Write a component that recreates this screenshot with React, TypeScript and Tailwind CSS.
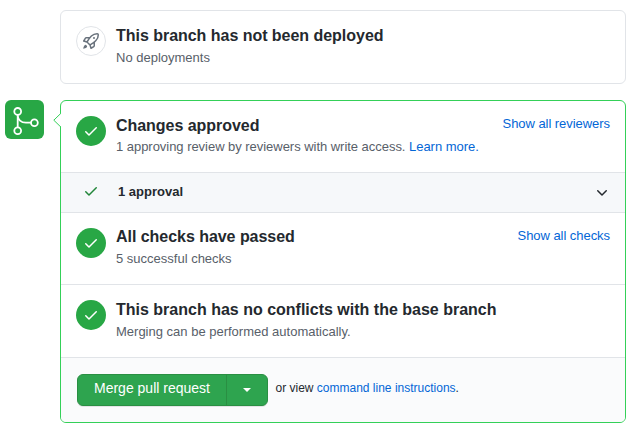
import type { ReactNode } from "react";

const CHECK =
  "M13.78 4.22a.75.75 0 010 1.06l-7.25 7.25a.75.75 0 01-1.06 0L2.22 9.28a.75.75 0 011.06-1.06L6 10.94l6.72-6.72a.75.75 0 011.06 0z";
const CHEVRON =
  "M12.78 6.22a.75.75 0 010 1.06l-4.25 4.25a.75.75 0 01-1.06 0L3.22 7.28a.75.75 0 011.06-1.06L8 9.94l3.72-3.72a.75.75 0 011.06 0z";
const ROCKET =
  "M14.064 0a8.75 8.75 0 00-6.187 2.563l-.459.458c-.314.314-.616.641-.904.979H3.31a1.75 1.75 0 00-1.49.833L.11 7.607a.75.75 0 00.418 1.11l3.102.954c.037.051.079.1.124.145l2.429 2.428c.046.046.094.088.145.125l.954 3.102a.75.75 0 001.11.418l2.774-1.707a1.75 1.75 0 00.833-1.49V9.485c.338-.288.665-.59.979-.904l.458-.459A8.75 8.75 0 0016 1.936V1.75A1.75 1.75 0 0014.25 0h-.186zM10.5 10.625c-.088.06-.177.118-.266.175l-2.35 1.521.548 1.783 1.949-1.2a.25.25 0 00.119-.213v-2.066zM3.678 8.116L5.2 5.766c.058-.09.117-.178.176-.266H3.309a.25.25 0 00-.213.119l-1.2 1.95 1.782.547zm5.26-4.493A7.25 7.25 0 0114.063 1.5h.186a.25.25 0 01.25.25v.186a7.25 7.25 0 01-2.123 5.127l-.459.458a15.21 15.21 0 01-2.499 2.02l-2.317 1.5-2.143-2.143 1.5-2.317a15.25 15.25 0 012.02-2.5l.458-.458h.002zM12 5a1 1 0 11-2 0 1 1 0 012 0zm-8.44 9.56a1.5 1.5 0 10-2.12-2.12c-.734.73-1.047 2.332-1.15 3.003a.23.23 0 00.265.265c.671-.103 2.273-.416 3.005-1.148z";

function Icon({ d, className = "" }: { d: string; className?: string }) {
  return (
    <svg viewBox="0 0 16 16" className={`size-4 shrink-0 ${className}`} fill="currentColor">
      <path fillRule="evenodd" d={d} />
    </svg>
  );
}

function Section({
  title,
  action,
  className,
  textClass,
  children,
}: {
  title: string;
  action?: string;
  className: string;
  textClass: string;
  children: ReactNode;
}) {
  return (
    <section className={`flex items-start border-b border-[#e1e4e8] px-[15px] ${className}`}>
      <span className="flex size-[30px] shrink-0 items-center justify-center rounded-full bg-[#28a745] text-white">
        <Icon d={CHECK} />
      </span>
      <div className={`ml-[10px] grow ${textClass}`}>
        <h3 className="text-[16px] leading-[24px] font-bold">{title}</h3>
        <p className="text-[13px] leading-[20px] text-[#586069]">{children}</p>
      </div>
      {action && (
        <a className="-mt-[2px] text-[13px] leading-[20px] tracking-[-0.05px] text-[#0366d6]">{action}</a>
      )}
    </section>
  );
}

export default function App() {
  return (
    <main className="h-[432px] w-[640px] overflow-hidden bg-white pt-[10px] pr-[14px] pl-[5px] font-['Liberation_Sans',sans-serif] text-[#24292e]">
      <section className="ml-[55px] flex h-[74px] rounded-[6px] border border-[#e1e4e8] px-[15px] pt-[15px]">
        <span className="flex size-[30px] shrink-0 items-center justify-center rounded-full border border-[#e1e4e8] text-[#6a737d]">
          <Icon d={ROCKET} />
        </span>
        <div className="-mt-[2px] ml-[10px]">
          <h3 className="text-[16px] leading-[24px] font-bold tracking-[-0.03px]">This branch has not been deployed</h3>
          <p className="text-[13px] leading-[20px] text-[#586069]">No deployments</p>
        </div>
      </section>

      <div className="mt-4 flex items-start">
        <span className="size-[39px] shrink-0 rounded-[6px] bg-[#28a745]">
          <svg viewBox="0 0 39 39" className="size-full" fill="none" stroke="white" strokeWidth="1.8">
            <circle cx="12.7" cy="11.4" r="3.4" />
            <circle cx="12.7" cy="30.8" r="3.4" />
            <circle cx="29.4" cy="22.7" r="3.4" />
            <path d="M12.7 14.8v12.6M12.7 15c0 4.600 3.400 7.700 8.200 7.700h5" />
          </svg>
        </span>
        <div className="relative ml-[16px] h-[323px] w-[566px] rounded-[6px] border border-[#34d058]">
          <svg viewBox="0 0 8 16" className="absolute top-[11px] -left-[8px] h-4 w-2">
            <path d="M8 1L1 8l7 7z" fill="white" />
            <path d="M8 1.200L.8 8.200l7.200 7" fill="none" stroke="#34d058" />
          </svg>
          <Section
            title="Changes approved"
            action="Show all reviewers"
            className="h-[72px] pt-[15px]"
            textClass="-mt-[2px] [&>h3]:tracking-[-0.04px] [&>p]:-mt-px [&>p]:tracking-[-0.035px]"
          >
            1 approving review by reviewers with write access. <a className="text-[#0366d6]">Learn more.</a>
          </Section>
          <div className="flex h-[40px] items-center border-b border-[#e1e4e8] bg-[#f6f8fa] pr-[15px] pb-[2px] pl-[22px]">
            <Icon d={CHECK} className="-mt-px text-[#22863a]" />
            <strong className="ml-[19px] grow text-[13px] leading-[20px]">1 approval</strong>
            <Icon d={CHEVRON} />
          </div>
          <Section
            title="All checks have passed"
            action="Show all checks"
            className="h-[72px] pt-[15px]"
            textClass="-mt-[3px] [&>h3]:tracking-[-0.04px]"
          >
            5 successful checks
          </Section>
          <Section
            title="This branch has no conflicts with the base branch"
            className="h-[73px] pt-[15px]"
            textClass="-mt-[2px]"
          >
            Merging can be performed automatically.
          </Section>
          <footer className="flex h-[64px] items-center rounded-b-[5px] bg-[#fafbfc] pl-[16px] text-[12px]">
            <div className="flex h-[32px] w-[191px] overflow-hidden rounded-[6px] border border-[#2a8f43] bg-[#2ea44f] text-white shadow-[0_1px_0_rgba(27,31,35,0.1)]">
              <span className="w-[149px] border-r border-[#2a8f43] pl-[16px] text-[14px] leading-[27px]">Merge pull request</span>
              <span className="flex grow items-center justify-center">
                <span className="border-x-4 border-t-4 border-x-transparent border-t-white" />
              </span>
            </div>
            <p className="ml-[7.500px] pb-[4px] leading-[18px]">
              or view <a className="text-[#0366d6]">command line instructions</a>.
            </p>
          </footer>
        </div>
      </div>
    </main>
  );
}
